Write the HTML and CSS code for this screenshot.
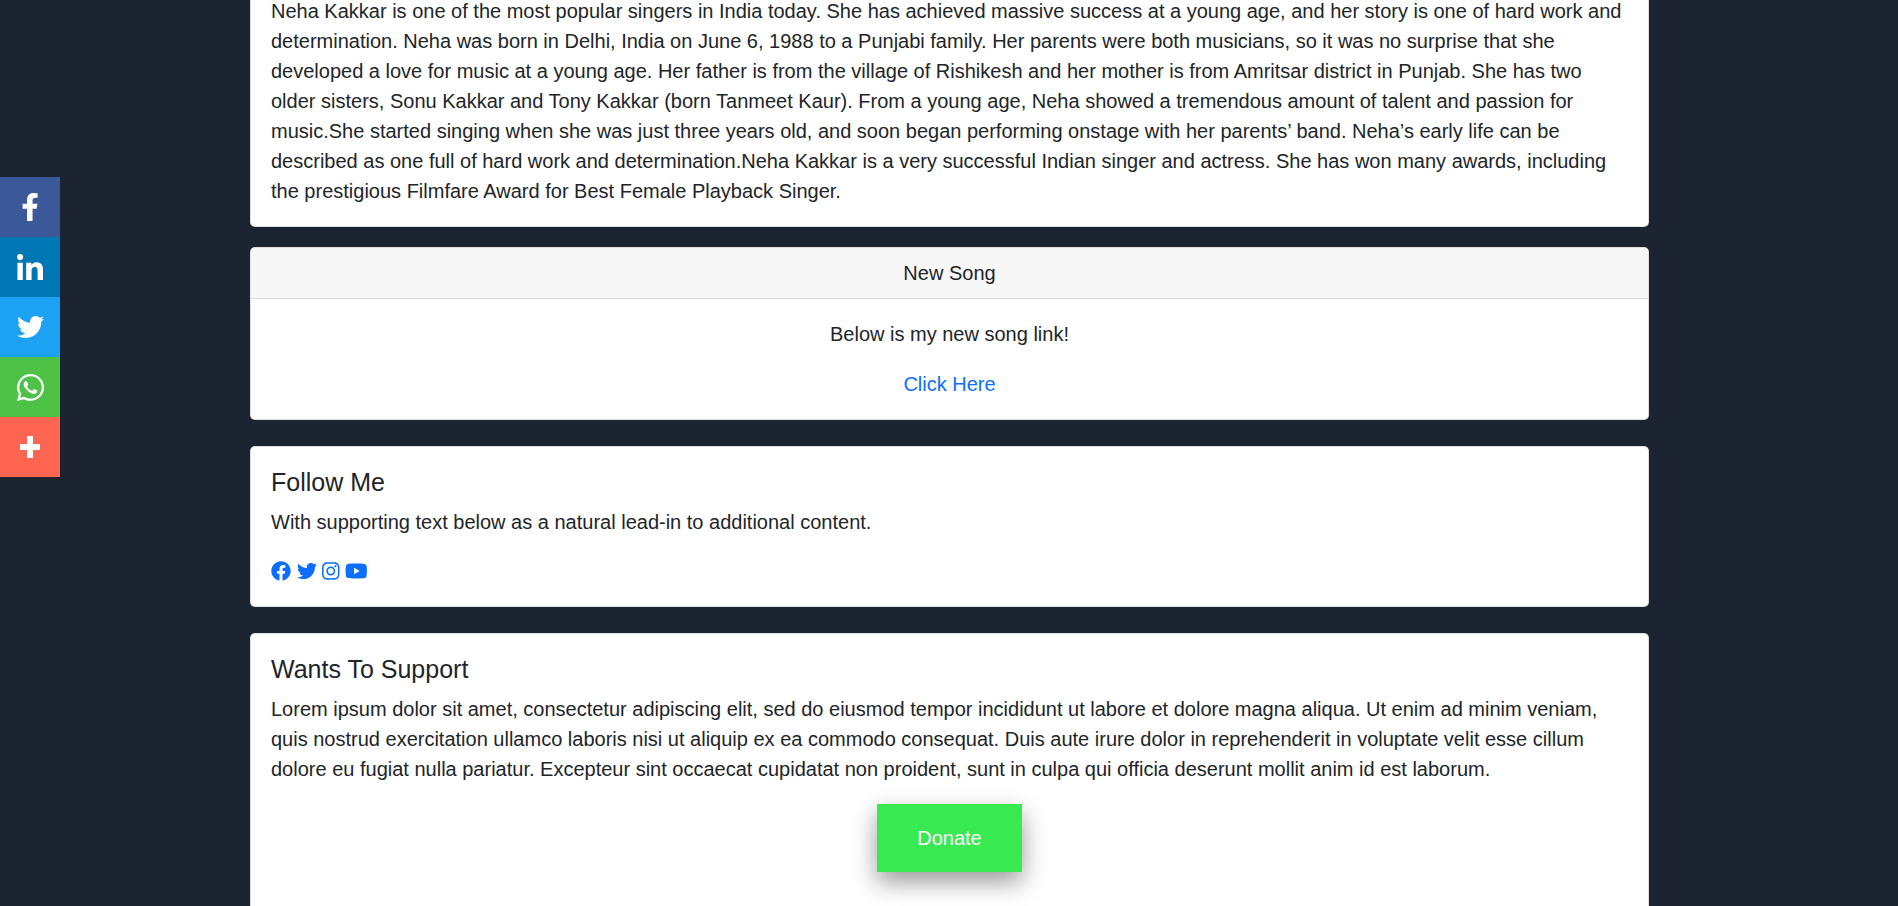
FILE: index.html
```html
<!DOCTYPE html>
<html lang="en">
<head>
<meta charset="utf-8">
<title>Neha Kakkar</title>
<link rel="stylesheet" href="styles.css">
</head>
<body>
<nav class="share">
  <a class="share-item fb" href="#"><svg class="ic-f" viewBox="22 0 272 512"><path d="M279.14 288l14.22-92.66h-88.91v-60.13c0-25.35 12.42-50.06 52.24-50.06h40.42V6.26S260.43 0 225.36 0c-73.22 0-121.08 44.38-121.08 124.72v70.62H22.89V288h81.39v224h100.17V288z"/></svg></a>
  <a class="share-item li" href="#"><svg class="ic-in" viewBox="0 0 448 448"><path d="M100.28 448H7.4V148.9h92.88zM53.79 108.1C24.09 108.1 0 83.5 0 53.8a53.79 53.79 0 0 1 107.58 0c0 29.7-24.1 54.3-53.79 54.3zM447.9 448h-92.68V302.4c0-34.7-.7-79.2-48.29-79.2-48.29 0-55.69 37.7-55.69 76.7V448h-92.78V148.9h89.08v40.8h1.3c12.4-23.5 42.69-48.3 87.88-48.3 94 0 111.28 61.9 111.28 142.3V448z"/></svg></a>
  <a class="share-item tw" href="#"><svg class="ic-tw" viewBox="0 48 512 416"><path d="M459.37 151.716c.325 4.548.325 9.097.325 13.645 0 138.72-105.583 298.558-298.558 298.558-59.452 0-114.68-17.219-161.137-47.106 8.447.974 16.568 1.299 25.34 1.299 49.055 0 94.213-16.568 130.274-44.832-46.132-.975-84.792-31.188-98.112-72.772 6.498.974 12.995 1.624 19.818 1.624 9.421 0 18.843-1.3 27.614-3.573-48.081-9.747-84.143-51.98-84.143-102.985v-1.299c13.969 7.797 30.214 12.67 47.431 13.319-28.264-18.843-46.781-51.005-46.781-87.391 0-19.492 5.197-37.36 14.294-52.954 51.655 63.675 129.3 105.258 216.365 109.807-1.624-7.797-2.599-15.918-2.599-24.04 0-57.828 46.782-104.934 104.934-104.934 30.213 0 57.502 12.67 76.67 33.137 23.715-4.548 46.456-13.32 66.599-25.34-7.798 24.366-24.366 44.833-46.132 57.827 21.117-2.273 41.584-8.122 60.426-16.243-14.292 20.791-32.161 39.308-52.628 54.253z"/></svg></a>
  <a class="share-item wa" href="#"><svg class="ic-wa" viewBox="0 32 448 448"><path d="M380.9 97.1C339 55.1 283.2 32 223.9 32c-122.4 0-222 99.6-222 222 0 39.1 10.2 77.3 29.6 111L0 480l117.7-30.9c32.4 17.7 68.9 27 106.1 27h.1c122.3 0 224.1-99.6 224.1-222 0-59.3-25.2-115-67.1-157zm-157 341.6c-33.2 0-65.7-8.9-94-25.7l-6.7-4-69.8 18.3L72 359.2l-4.4-7c-18.5-29.4-28.2-63.3-28.2-98.2 0-101.7 82.8-184.5 184.6-184.5 49.3 0 95.6 19.2 130.4 54.1 34.8 34.9 56.2 81.2 56.1 130.5 0 101.8-84.9 184.6-186.6 184.6zm101.2-138.2c-5.5-2.8-32.8-16.2-37.9-18-5.1-1.9-8.8-2.8-12.5 2.8-3.7 5.6-14.3 18-17.6 21.8-3.2 3.7-6.5 4.2-12 1.4-32.6-16.3-54-29.1-75.5-66-5.7-9.8 5.7-9.1 16.3-30.3 1.8-3.7.9-6.9-.5-9.7-1.4-2.8-12.5-30.1-17.1-41.2-4.5-10.8-9.1-9.3-12.5-9.5-3.2-.2-6.9-.2-10.6-.2-3.7 0-9.7 1.4-14.8 6.9-5.1 5.6-19.4 19-19.4 46.3 0 27.3 19.9 53.7 22.6 57.4 2.8 3.7 39.1 59.7 94.8 83.8 35.2 15.2 49 16.5 66.6 13.9 10.7-1.6 32.8-13.4 37.4-26.4 4.6-13 4.6-24.1 3.2-26.4-1.3-2.5-5-3.9-10.5-6.6z"/></svg></a>
  <a class="share-item more" href="#"><svg class="ic-plus" viewBox="0 0 20 22" preserveAspectRatio="none"><path d="M7 0h6v8h7v6h-7v8H7v-8H0V8h7z"/></svg></a>
</nav>

<main class="page">
  <section class="card card-bio">
    <div class="card-body">
      <p class="text last">Neha Kakkar is one of the most popular singers in India today. She has achieved massive success at a young age, and her story is one of hard work and determination. Neha was born in Delhi, India on June 6, 1988 to a Punjabi family. Her parents were both musicians, so it was no surprise that she developed a love for music at a young age. Her father is from the village of Rishikesh and her mother is from Amritsar district in Punjab. She has two older sisters, Sonu Kakkar and Tony Kakkar (born Tanmeet Kaur). From a young age, Neha showed a tremendous amount of talent and passion for music.She started singing when she was just three years old, and soon began performing onstage with her parents’ band. Neha’s early life can be described as one full of hard work and determination.Neha Kakkar is a very successful Indian singer and actress. She has won many awards, including the prestigious Filmfare Award for Best Female Playback Singer.</p>
    </div>
  </section>

  <section class="card card-song">
    <header class="card-header">New Song</header>
    <div class="card-body center">
      <p class="text">Below is my new song link!</p>
      <a class="link" href="#">Click Here</a>
    </div>
  </section>

  <section class="card card-follow">
    <div class="card-body">
      <h5 class="card-title">Follow Me</h5>
      <p class="text">With supporting text below as a natural lead-in to additional content.</p>
      <div class="socials">
        <a class="social" href="#"><svg class="s-20" viewBox="0 0 512 512"><path d="M504 256C504 119 393 8 256 8S8 119 8 256c0 123.78 90.69 226.38 209.25 245V327.69h-63V256h63v-54.64c0-62.15 37-96.48 93.67-96.48 27.14 0 55.52 4.84 55.52 4.84v61h-31.28c-30.8 0-40.41 19.12-40.41 38.73V256h68.78l-11 71.69h-57.78V501C413.31 482.38 504 379.78 504 256z"/></svg></a>
        <a class="social" href="#"><svg class="s-20" viewBox="0 0 512 512"><path d="M459.37 151.716c.325 4.548.325 9.097.325 13.645 0 138.72-105.583 298.558-298.558 298.558-59.452 0-114.68-17.219-161.137-47.106 8.447.974 16.568 1.299 25.34 1.299 49.055 0 94.213-16.568 130.274-44.832-46.132-.975-84.792-31.188-98.112-72.772 6.498.974 12.995 1.624 19.818 1.624 9.421 0 18.843-1.3 27.614-3.573-48.081-9.747-84.143-51.98-84.143-102.985v-1.299c13.969 7.797 30.214 12.67 47.431 13.319-28.264-18.843-46.781-51.005-46.781-87.391 0-19.492 5.197-37.36 14.294-52.954 51.655 63.675 129.3 105.258 216.365 109.807-1.624-7.797-2.599-15.918-2.599-24.04 0-57.828 46.782-104.934 104.934-104.934 30.213 0 57.502 12.67 76.67 33.137 23.715-4.548 46.456-13.32 66.599-25.34-7.798 24.366-24.366 44.833-46.132 57.827 21.117-2.273 41.584-8.122 60.426-16.243-14.292 20.791-32.161 39.308-52.628 54.253z"/></svg></a>
        <a class="social" href="#"><svg class="s-ig" viewBox="0 0 448 512"><path d="M224.1 141c-63.6 0-114.9 51.3-114.9 114.9s51.3 114.9 114.9 114.9S339 319.5 339 255.9 287.7 141 224.1 141zm0 189.6c-41.1 0-74.7-33.5-74.7-74.7s33.5-74.7 74.7-74.7 74.7 33.5 74.7 74.7-33.6 74.7-74.7 74.7zm146.4-194.3c0 14.9-12 26.8-26.8 26.8-14.9 0-26.8-12-26.8-26.8s12-26.8 26.8-26.8 26.8 12 26.8 26.8zm76.1 27.2c-1.7-35.9-9.9-67.7-36.2-93.9-26.2-26.2-58-34.4-93.9-36.2-37-2.1-147.9-2.1-184.9 0-35.8 1.7-67.6 9.9-93.9 36.1s-34.4 58-36.2 93.9c-2.1 37-2.1 147.9 0 184.9 1.7 35.9 9.9 67.7 36.2 93.9s58 34.4 93.9 36.2c37 2.1 147.9 2.1 184.9 0 35.9-1.7 67.7-9.9 93.9-36.2 26.2-26.2 34.4-58 36.2-93.9 2.1-37 2.1-147.8 0-184.8zM398.8 388c-7.8 19.6-22.9 34.7-42.6 42.6-29.5 11.7-99.5 9-132.1 9s-102.7 2.6-132.1-9c-19.6-7.8-34.7-22.9-42.6-42.6-11.7-29.5-9-99.5-9-132.1s-2.6-102.7 9-132.1c7.8-19.6 22.9-34.7 42.6-42.6 29.5-11.7 99.5-9 132.1-9s102.7-2.6 132.1 9c19.6 7.8 34.7 22.9 42.6 42.6 11.7 29.5 9 99.5 9 132.1s2.7 102.7-9 132.1z"/></svg></a>
        <a class="social" href="#"><svg class="s-yt" viewBox="0 0 576 512"><path d="M549.655 124.083c-6.281-23.65-24.787-42.276-48.284-48.597C458.781 64 288 64 288 64S117.22 64 74.629 75.486c-23.497 6.322-42.003 24.947-48.284 48.597-11.412 42.867-11.412 132.305-11.412 132.305s0 89.438 11.412 132.305c6.281 23.65 24.787 41.5 48.284 47.821C117.22 448 288 448 288 448s170.78 0 213.371-11.486c23.497-6.321 42.003-24.171 48.284-47.821 11.412-42.867 11.412-132.305 11.412-132.305s0-89.438-11.412-132.305zm-317.51 213.508V175.185l142.739 81.205-142.739 81.201z"/></svg></a>
      </div>
    </div>
  </section>

  <section class="card card-support">
    <div class="card-body body-tall">
      <h5 class="card-title">Wants To Support</h5>
      <p class="text">Lorem ipsum dolor sit amet, consectetur adipiscing elit, sed do eiusmod tempor incididunt ut labore et dolore magna aliqua. Ut enim ad minim veniam, quis nostrud exercitation ullamco laboris nisi ut aliquip ex ea commodo consequat. Duis aute irure dolor in reprehenderit in voluptate velit esse cillum dolore eu fugiat nulla pariatur. Excepteur sint occaecat cupidatat non proident, sunt in culpa qui officia deserunt mollit anim id est laborum.</p>
      <div class="donate-row">
        <a class="donate" href="#">Donate</a>
      </div>
    </div>
  </section>
</main>
</body>
</html>
```
FILE: styles.css
```css
* { box-sizing: border-box; }

html, body {
  height: 906px;
  overflow: hidden;
}

body {
  margin: 0;
  background: #1c2331;
  color: #212529;
  font-family: "Liberation Sans", Arial, sans-serif;
  font-size: 20px;
  line-height: 30px;
}

/* Floating share bar */
.share {
  position: fixed;
  left: 0;
  top: 177px;
  width: 60px;
  display: flex;
  flex-direction: column;
}

.share-item {
  width: 60px;
  height: 60px;
  display: flex;
  align-items: center;
  justify-content: center;
}

.share-item svg { fill: #fff; display: block; }
.fb { background: #3b5998; }
.li { background: #0077b5; }
.tw { background: #1da1f2; }
.wa { background: #4dc247; }
.more { background: #ff6550; }

.ic-f { width: 16px; height: 28px; }
.ic-in { width: 26px; height: 26px; }
.ic-tw { width: 27px; height: 22px; }
.ic-wa { width: 27px; height: 27px; }
.ic-plus { width: 20px; height: 22px; }

/* Page column */
.page {
  margin: 0 249px 0 250px;
  display: flex;
  flex-direction: column;
}

.card {
  background: #fff;
  border: 1px solid rgba(0, 0, 0, .125);
  border-radius: 5px;
  overflow: hidden;
  flex: none;
}

.card-bio { margin-top: -25px; margin-bottom: 20px; }
.card-song { margin-bottom: 26px; }
.card-follow { margin-bottom: 26px; }

.card-header {
  height: 51px;
  padding: 10px 20px;
  text-align: center;
  background: #f7f7f7;
  border-bottom: 1px solid rgba(0, 0, 0, .125);
}

.card-body { padding: 20px; }
.body-tall { padding-bottom: 120px; }
.center { text-align: center; }

.card-title {
  margin: 0 0 10px;
  font-size: 25px;
  font-weight: 400;
  line-height: 30px;
}

.text { margin: 0 0 20px; }
.text.last { margin-bottom: 0; }

.link { color: #0d6efd; text-decoration: none; display: block; }

.socials {
  display: flex;
  gap: 5.56px;
  height: 28px;
  margin-bottom: 1px;
  align-items: center;
}

.social { color: #0d6efd; display: flex; }
.social svg { fill: currentColor; display: block; height: 20px; }
.s-20 { width: 20px; }
.s-ig { width: 17.5px; }
.s-yt { width: 22.5px; }

.donate-row { display: flex; justify-content: center; }

.donate {
  display: block;
  width: 145px;
  height: 68px;
  padding: 19px 0;
  background: #39e951;
  color: #fff;
  text-decoration: none;
  text-align: center;
  box-shadow: 0 10px 25px rgba(0, 0, 0, .4);
}
```
